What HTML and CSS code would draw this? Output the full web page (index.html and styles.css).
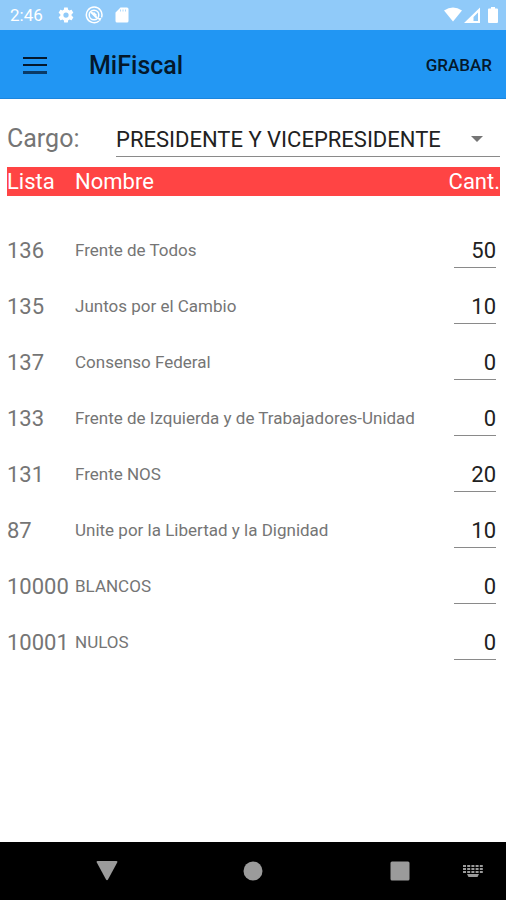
FILE: index.html
```html
<!DOCTYPE html>
<html lang="es">
<head>
  <meta charset="UTF-8" />
  <meta name="viewport" content="width=device-width, initial-scale=1" />
  <title>MiFiscal</title>
  <link rel="stylesheet" href="styles.css">
</head>
<body>
  <div class="status-bar">
    <span class="clock">2:46</span>
    <svg class="status-icon" viewBox="0 0 24 24"><path fill="#fff" d="M19.4 13c0-.3.1-.6.1-1s0-.7-.1-1l2.1-1.6c.2-.2.3-.4.1-.7l-2-3.4c-.1-.2-.4-.3-.6-.2l-2.5 1c-.5-.4-1.1-.7-1.7-1l-.4-2.6c0-.3-.2-.5-.5-.5h-4c-.3 0-.5.2-.5.5L9.100 5.100c-.6.3-1.200.6-1.700 1l-2.500-1c-.2-.1-.5 0-.6.2l-2 3.400c-.1.300-.1.500.1.700L4.500 11c0 .3-.1.700-.1 1s0 .7.100 1l-2.100 1.600c-.2.200-.2.400-.1.700l2 3.400c.1.200.4.300.6.200l2.500-1c.5.400 1.100.7 1.700 1l.4 2.600c0 .3.200.5.500.5h4c.3 0 .5-.2.5-.5l.4-2.600c.6-.3 1.200-.6 1.700-1l2.500 1c.2.100.5 0 .6-.2l2-3.400c.1-.3.1-.5-.1-.7zM12 15.500a3.500 3.500 0 1 1 0-7 3.500 3.500 0 0 1 0 7z"/></svg>
    <svg class="status-icon" viewBox="0 0 18 18"><g fill="none" stroke="#fff" stroke-width="1.500"><path d="M14 15A7.800 7.800 0 1 1 16.500 11.500"/><circle cx="9" cy="9" r="4.800"/><path stroke-width="2" d="M6 6l6 6"/><path d="M8.500 6.500l3 3"/></g><path fill="#fff" d="M12.500 12h4l-1.500 3.500z"/></svg>
    <svg class="status-icon" viewBox="0 0 18 18"><path fill="#fff" fill-rule="evenodd" d="M7.500 1.500H14a1.500 1.500 0 0 1 1.500 1.500v12a1.500 1.500 0 0 1-1.500 1.500H4A1.500 1.500 0 0 1 2.500 15V6.500z"/><path stroke="#90caf9" stroke-opacity="0.7" d="M7.500 3.500v2M10 3.500v2M12.500 3.500v2"/></svg>
    <span class="spacer"></span>
    <svg class="signal-icons" viewBox="0 0 56 18">
      <path fill="#fff" d="M1 4.500Q10-1.500 19 4.500L10 15.500z"/>
      <path fill="#fff" fill-rule="evenodd" d="M21 17L37 1.500V17zM30.500 15H35V6.500L30.500 11z"/>
      <path fill="#fff" d="M48 1h4v1.500h2a1 1 0 0 1 1 1V16a1 1 0 0 1-1 1h-8a1 1 0 0 1-1-1V3.500a1 1 0 0 1 1-1h2z"/>
    </svg>
  </div>

  <header class="app-bar">
    <button class="menu-btn" type="button" aria-label="Menú">
      <svg viewBox="0 0 24 18"><path fill="#04182b" d="M0 1h24v2H0zM0 8h24v2H0z"/><path fill="#0a3a66" d="M0 15h24v3H0z"/></svg>
    </button>
    <h1>MiFiscal</h1>
    <button class="save-btn" type="button">GRABAR</button>
  </header>

  <main>
    <div class="cargo-row">
      <label for="cargo">Cargo:</label>
      <div class="select-wrap">
        <select id="cargo">
          <option>PRESIDENTE Y VICEPRESIDENTE</option>
        </select>
        <svg class="arrow" viewBox="0 0 12 6"><path fill="#757575" d="M0 0h12L6 6z"/></svg>
      </div>
    </div>

    <table class="votos">
      <thead>
        <tr><th class="lista">Lista</th><th>Nombre</th><th class="cant">Cant.</th></tr>
      </thead>
      <tbody>
        <tr><td class="lista">136</td><td><label for="l136">Frente de Todos</label></td><td class="cant"><input id="l136" type="text" inputmode="numeric" value="50"></td></tr>
        <tr><td class="lista">135</td><td><label for="l135">Juntos por el Cambio</label></td><td class="cant"><input id="l135" type="text" inputmode="numeric" value="10"></td></tr>
        <tr><td class="lista">137</td><td><label for="l137">Consenso Federal</label></td><td class="cant"><input id="l137" type="text" inputmode="numeric" value="0"></td></tr>
        <tr><td class="lista">133</td><td><label for="l133">Frente de Izquierda y de Trabajadores-Unidad</label></td><td class="cant"><input id="l133" type="text" inputmode="numeric" value="0"></td></tr>
        <tr><td class="lista">131</td><td><label for="l131">Frente NOS</label></td><td class="cant"><input id="l131" type="text" inputmode="numeric" value="20"></td></tr>
        <tr><td class="lista">87</td><td><label for="l87">Unite por la Libertad y la Dignidad</label></td><td class="cant"><input id="l87" type="text" inputmode="numeric" value="10"></td></tr>
        <tr><td class="lista">10000</td><td><label for="l10000">BLANCOS</label></td><td class="cant"><input id="l10000" type="text" inputmode="numeric" value="0"></td></tr>
        <tr><td class="lista">10001</td><td><label for="l10001">NULOS</label></td><td class="cant"><input id="l10001" type="text" inputmode="numeric" value="0"></td></tr>
      </tbody>
    </table>
  </main>

  <nav class="nav-bar">
    <button type="button" aria-label="Atrás"><svg viewBox="0 0 22 20"><path fill="#9b9b9b" d="M1.500 0h19q1.500 0 .7 1.500L12 18.500q-1 1.500-2 0L.8 1.500Q0 0 1.500 0z"/></svg></button>
    <button type="button" aria-label="Inicio"><svg viewBox="0 0 22 20"><circle cx="11" cy="10" r="9.500" fill="#9b9b9b"/></svg></button>
    <button type="button" aria-label="Recientes"><svg viewBox="0 0 22 20"><rect x="1.500" y="0.500" width="19" height="19" rx="1.500" fill="#9b9b9b"/></svg></button>
    <button class="keyboard" type="button" aria-label="Teclado"><svg viewBox="0 0 22 20"><path stroke="#9b9b9b" stroke-width="2" stroke-dasharray="3 1.200" d="M1 5h20M1 8h20M1 11h20"/><path fill="#9b9b9b" d="M5 13h12l-1.500 3h-9z"/></svg></button>
  </nav>
</body>
</html>
```

FILE: styles.css
```css
* { box-sizing: border-box; }
body {
  font-family: Roboto, sans-serif;
  margin: 0;
  min-height: 100vh;
  display: flex;
  flex-direction: column;
  background: #fff;
  color: #757575;
}
button {
  font-family: inherit;
  border: none;
  background: none;
  padding: 0;
  cursor: pointer;
}
svg { display: block; }

.status-bar {
  display: flex;
  align-items: center;
  height: 30px;
  padding: 0 7px 0 10px;
  background: #90caf9;
}
.clock { font-size: 17px; color: #fff; margin-right: 4px; }
.status-icon { width: 18px; height: 18px; margin-left: 10px; }
.spacer { flex: 1; }
.signal-icons { width: 56px; height: 18px; }

.app-bar {
  display: flex;
  align-items: center;
  height: 69px;
  padding: 2px 14px 0 23px;
  background: #2196f3;
  border-bottom: 1px solid #1b86de;
}
.menu-btn svg { width: 24px; height: 18px; }
.app-bar h1 {
  flex: 1;
  margin: 0 0 0 42px;
  font-size: 25px;
  font-weight: 500;
  color: #04182b;
}
.save-btn { font-size: 17px; font-weight: 500; color: #04182b; }

main { flex: 1; padding: 20px 6px 20px 7px; }
.cargo-row {
  display: flex;
  align-items: center;
  height: 38px;
  margin-bottom: 10px;
}
.cargo-row label { width: 109px; font-size: 25px; }
.select-wrap {
  position: relative;
  flex: 1;
  border-bottom: 1px solid #8a8a8a;
}
.select-wrap select {
  display: block;
  width: 100%;
  height: 37px;
  padding: 3px 40px 0 0;
  border: none;
  background: none;
  appearance: none;
  font-family: inherit;
  font-size: 22px;
  color: #212121;
}
.arrow {
  position: absolute;
  right: 17px;
  top: 17px;
  width: 12px;
  height: 6px;
  pointer-events: none;
}

.votos {
  width: 100%;
  table-layout: fixed;
  border-collapse: collapse;
}
.votos th, .votos td { padding: 0; text-align: left; }
.votos th {
  height: 29px;
  padding-top: 1px;
  background: #ff4444;
  color: #fff;
  font-size: 22px;
  font-weight: 400;
  line-height: 28px;
}
.votos .lista { width: 68px; font-size: 22px; }
.votos .cant { width: 52px; text-align: right; }
.votos tbody::before {
  content: "";
  display: block;
  height: 26px;
}
.votos td { height: 56px; font-size: 17px; }
.votos input {
  width: 42px;
  height: 36px;
  margin: 0 4px 0 0;
  padding: 1px 0 0;
  border: none;
  border-bottom: 1px solid #8a8a8a;
  background: none;
  font-family: inherit;
  font-size: 22px;
  color: #212121;
  text-align: right;
}

.nav-bar {
  display: grid;
  grid-template-columns: 2fr 2fr 1fr 22px;
  align-items: center;
  height: 58px;
  padding: 0 22px 0 96px;
  background: #000;
}
.nav-bar button { width: 22px; }
.nav-bar svg { width: 22px; height: 20px; }
```
